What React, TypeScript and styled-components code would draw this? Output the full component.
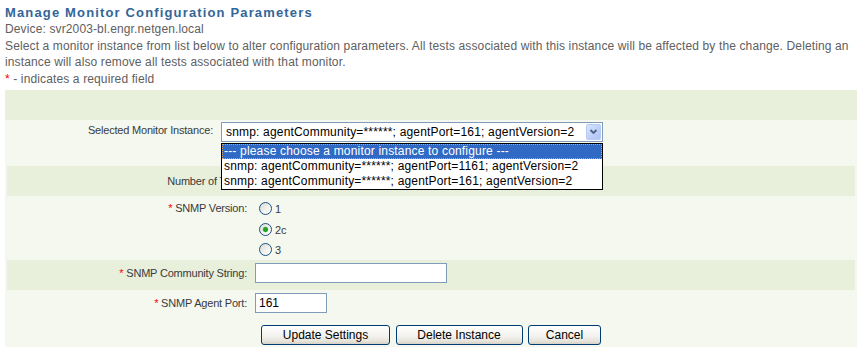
import { createGlobalStyle, styled } from 'styled-components';

const GlobalStyle = createGlobalStyle`
  html, body {
    margin: 0;
    padding: 0;
    background: #ffffff;
  }
  body {
    font-family: "Liberation Sans", Arial, sans-serif;
  }
`;

const options = [
  '--- please choose a monitor instance to configure ---',
  'snmp: agentCommunity=******; agentPort=1161; agentVersion=2',
  'snmp: agentCommunity=******; agentPort=161; agentVersion=2',
];

const versions = [
  { value: '1', checked: false },
  { value: '2c', checked: true },
  { value: '3', checked: false },
];

const App = () => {
  return (
    <>
      <GlobalStyle />
      <SPage>
        <STitle>Manage Monitor Configuration Parameters</STitle>
        <SInfo>Device: svr2003-bl.engr.netgen.local</SInfo>
        <SInfo>
          Select a monitor instance from list below to alter configuration parameters. All tests associated with this
          instance will be affected by the change. Deleting an
          <br />
          instance will also remove all tests associated with that monitor.
        </SInfo>
        <SInfo>
          <SStar>*</SStar> - indicates a required field
        </SInfo>

        <SPanel>
          <SPanelHead />

          <SInstanceRow>
            <SLabel>Selected Monitor Instance:</SLabel>
            <SSelectWrap>
              <SSelectBox>
                <SSelectText>snmp: agentCommunity=******; agentPort=161; agentVersion=2</SSelectText>
                <SArrowButton>
                  <svg width="9" height="6" viewBox="0 0 9 6">
                    <polyline points="1.5,1 4.5,4 7.5,1" fill="none" stroke="#4d6185" strokeWidth="1.8" />
                  </svg>
                </SArrowButton>
              </SSelectBox>
              <SOptionList>
                {options.map((opt, i) => (
                  <SOption key={opt} $active={i === 0}>
                    {opt}
                  </SOption>
                ))}
              </SOptionList>
            </SSelectWrap>
          </SInstanceRow>

          <SFieldRow $dark $h={30}>
            <SLabel>Number of Tests:</SLabel>
          </SFieldRow>

          <SFieldRow $h={64} $top $pt={2}>
            <SLabel $lh={20.5}>
              <SStar>*</SStar> SNMP Version:
            </SLabel>
            <SRadioList>
              {versions.map(v => (
                <SRadioItem key={v.value}>
                  <SRadio type="radio" name="version" defaultChecked={v.checked} />
                  <span>{v.value}</span>
                </SRadioItem>
              ))}
            </SRadioList>
          </SFieldRow>

          <SFieldRow $dark $h={30} $top $pt={3}>
            <SLabel $lh={20}>
              <SStar>*</SStar> SNMP Community String:
            </SLabel>
            <STextInput $w={192} defaultValue="" />
          </SFieldRow>

          <SFieldRow $h={28} $top $pt={3}>
            <SLabel $lh={20}>
              <SStar>*</SStar> SNMP Agent Port:
            </SLabel>
            <STextInput $w={72} defaultValue="161" />
          </SFieldRow>

          <SFieldRow $h={29} $top $pt={7}>
            <span />
            <SButtons>
              <SButton $w={129}>Update Settings</SButton>
              <SButton $w={127}>Delete Instance</SButton>
              <SButton $w={73}>Cancel</SButton>
            </SButtons>
          </SFieldRow>
        </SPanel>
      </SPage>
    </>
  );
};

const SPage = styled.div`
  padding: 5px 5px 0;
  font-family: "Liberation Sans", Arial, sans-serif;
`;

const STitle = styled.h1`
  margin: 0;
  font-size: 13px;
  line-height: 16px;
  font-weight: bold;
  letter-spacing: 1.15px;
  color: #336699;
`;

const SInfo = styled.p`
  margin: 0;
  font-size: 12px;
  line-height: 16.6px;
  letter-spacing: 0.13px;
  color: #606060;
`;

const SStar = styled.span`
  color: #ff0000;
`;

const SPanel = styled.div`
  margin-top: 3px;
  background: #f4f8ee;
`;

const SPanelHead = styled.div`
  height: 30px;
  background: #e8f0dc;
`;

const SInstanceRow = styled.div`
  display: grid;
  grid-template-columns: 206px 382px;
  column-gap: 8px;
  align-items: start;
  height: 46px;
  box-sizing: border-box;
  padding: 2px 2px 0;
`;

const SLabel = styled.div<{ $lh?: number }>`
  font-size: 11px;
  letter-spacing: -0.2px;
  line-height: ${p => p.$lh ?? 17}px;
  color: #3a3a3a;
  text-align: right;
  white-space: nowrap;
`;

const SSelectWrap = styled.div`
  position: relative;
  width: 382px;
`;

const SSelectBox = styled.div`
  display: flex;
  align-items: center;
  height: 20px;
  box-sizing: border-box;
  border: 1px solid #7f9db9;
  background: #ffffff;
`;

const SSelectText = styled.span`
  flex: 1;
  padding-left: 4px;
  font-size: 12px;
  letter-spacing: 0.18px;
  color: #000000;
  white-space: nowrap;
  overflow: hidden;
`;

const SArrowButton = styled.span`
  display: flex;
  align-items: center;
  justify-content: center;
  width: 15px;
  height: 16px;
  margin-right: 1px;
  box-sizing: border-box;
  border: 1px solid #b9cbf3;
  border-radius: 2px;
  background: linear-gradient(135deg, #d9e4fd 0%, #bccffa 60%, #aec4f6 100%);
`;

const SOptionList = styled.div`
  position: absolute;
  top: 21px;
  left: 0;
  right: 0;
  z-index: 5;
  border: 1px solid #000000;
  background: #ffffff;
`;

const SOption = styled.div<{ $active?: boolean }>`
  height: 15px;
  line-height: 13px;
  box-sizing: border-box;
  padding-left: 1px;
  font-size: 12px;
  letter-spacing: 0.18px;
  white-space: nowrap;
  color: ${p => (p.$active ? '#ffffff' : '#000000')};
  background: ${p => (p.$active ? '#316ac5' : 'transparent')};
  border: 1px dotted ${p => (p.$active ? '#e8a040' : 'transparent')};
`;

const SFieldRow = styled.div<{ $dark?: boolean; $h: number; $top?: boolean; $pt?: number }>`
  display: grid;
  grid-template-columns: 240px 1fr;
  column-gap: 8px;
  align-items: ${p => (p.$top ? 'start' : 'center')};
  height: ${p => p.$h}px;
  box-sizing: border-box;
  padding-top: ${p => p.$pt ?? 0}px;
  margin: 0 2px;
  background: ${p => (p.$dark ? '#e8f0dc' : 'transparent')};
`;

const SRadioList = styled.div`
  display: flex;
  flex-direction: column;
`;

const SRadioItem = styled.label`
  display: flex;
  align-items: center;
  height: 20.5px;
  font-size: 11px;
  color: #3a3a3a;

  span {
    padding-top: 1px;
  }
`;

const SRadio = styled.input`
  appearance: none;
  width: 13px;
  height: 13px;
  margin: 0 3px 0 4px;
  box-sizing: border-box;
  border: 1px solid #1c5180;
  border-radius: 50%;
  background: linear-gradient(135deg, #dcdcd5 0%, #f4f4f0 60%, #ffffff 100%);

  &:checked {
    background: radial-gradient(circle, #21a121 0 2px, #7ccd7c 2.6px, transparent 3.2px),
      linear-gradient(135deg, #dcdcd5 0%, #f4f4f0 60%, #ffffff 100%);
  }
`;

const STextInput = styled.input<{ $w: number }>`
  width: ${p => p.$w}px;
  height: 20px;
  box-sizing: border-box;
  margin: 0;
  padding: 0 3px;
  border: 1px solid #7f9db9;
  background: #ffffff;
  font-family: "Liberation Sans", Arial, sans-serif;
  font-size: 12px;
  color: #000000;
`;

const SButtons = styled.div`
  display: flex;
  gap: 5.5px;
  padding-left: 6px;
`;

const SButton = styled.button<{ $w: number }>`
  width: ${p => p.$w}px;
  height: 20px;
  box-sizing: border-box;
  padding: 0;
  border: 1px solid #003c74;
  border-radius: 3px;
  background: linear-gradient(180deg, #ffffff 0%, #f3f2ee 55%, #e6e3da 85%, #d6d0c5 100%);
  font-family: "Liberation Sans", Arial, sans-serif;
  font-size: 12px;
  color: #000000;
`;

export default App;
